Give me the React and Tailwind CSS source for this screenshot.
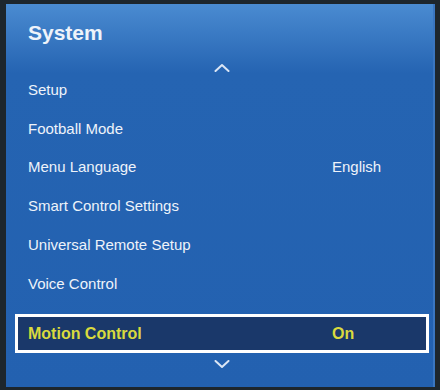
const items = [
  { label: 'Setup' },
  { label: 'Football Mode' },
  { label: 'Menu Language', value: 'English' },
  { label: 'Smart Control Settings' },
  { label: 'Universal Remote Setup' },
  { label: 'Voice Control' },
]

function Chevron({ up }) {
  return (
    <svg width="16" height="9" viewBox="0 0 16 9" fill="none">
      <path
        d={up ? 'M1.5 8 L8 2 L14.5 8' : 'M1.5 1 L8 7 L14.5 1'}
        stroke="#dbe6f5"
        strokeWidth="2"
        strokeLinecap="round"
        strokeLinejoin="round"
      />
    </svg>
  )
}

export default function App() {
  return (
    <div
      className="w-[440px] h-[390px] bg-[#1d262d] pt-[4px] pl-[6px] pr-[5px] pb-[3px]"
      style={{ fontFamily: '"Liberation Sans", Arial, sans-serif' }}
    >
      <div className="h-full flex flex-col bg-gradient-to-b from-[#4a8bd1] via-[#2564b2] via-[18%] to-[#2361b0] border-r-2 border-[#3a76c0] pt-[17px]">
        {/* Title */}
        <h1 className="pl-[22px] text-[21px] leading-[24px] font-bold text-[#eef3fa]">System</h1>

        {/* Scroll up */}
        <div className="flex justify-center pl-[5px] mt-[18px] h-[8px]">
          <Chevron up />
        </div>

        {/* Rows */}
        <div className="flex flex-col">
          {items.map((item) => (
            <div key={item.label} className="h-[38.7px] flex items-center pl-[22px] text-[15px] text-[#eef3fa]">
              <span className="w-[304px]">{item.label}</span>
              {item.value && <span>{item.value}</span>}
            </div>
          ))}
        </div>

        {/* Selected row */}
        <div className="mt-[11px] ml-[9px] mr-[4px] h-[39px] border-[3px] border-white bg-[#1a386a] flex items-center pl-[10px] text-[16px] font-bold text-[#d9da3e]">
          <span className="w-[304px]">Motion Control</span>
          <span>On</span>
        </div>

        {/* Scroll down */}
        <div className="flex justify-center pl-[5px] mt-[7px]">
          <Chevron />
        </div>
      </div>
    </div>
  )
}
